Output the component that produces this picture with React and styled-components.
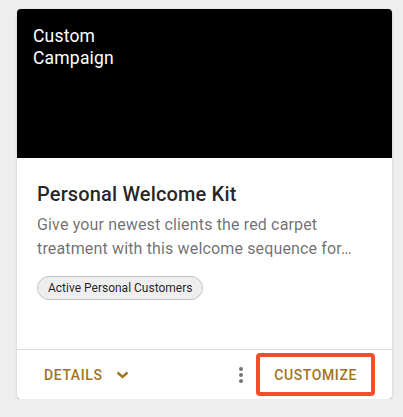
import React from 'react'
import styled, { createGlobalStyle } from 'styled-components'

const Global = createGlobalStyle`
  body {
    margin: 0;
    background: #eeeeee;
    font-family: Roboto, "Liberation Sans", sans-serif;
  }
  * { box-sizing: border-box; }
`

function App() {
  return (
    <>
      <Global />
      <S.Page>
        <S.Card>
          <S.Media>
            <S.MediaTitle>Custom Campaign</S.MediaTitle>
          </S.Media>
          <S.Content>
            <S.Title>Personal Welcome Kit</S.Title>
            <S.Description>
              Give your newest clients the red carpet treatment with this welcome
              sequence for…
            </S.Description>
            <S.Chip>Active Personal Customers</S.Chip>
          </S.Content>
          <S.Footer>
            <S.TextButton>
              DETAILS
              <svg width="13" height="8" viewBox="0 0 13 8">
                <path d="M1.5 1.5 L6.5 6 L11.5 1.5" fill="none" stroke="currentColor" strokeWidth="2.4" />
              </svg>
            </S.TextButton>
            <S.Spacer />
            <S.IconButton aria-label="more">
              <svg width="6" height="18" viewBox="0 0 6 18">
                <circle cx="3" cy="3" r="2" fill="currentColor" />
                <circle cx="3" cy="9" r="2" fill="currentColor" />
                <circle cx="3" cy="15" r="2" fill="currentColor" />
              </svg>
            </S.IconButton>
            <S.TextButton outlined>CUSTOMIZE</S.TextButton>
          </S.Footer>
        </S.Card>
      </S.Page>
    </>
  )
}

const S = {
  Page: styled.div`
    padding: 9px 0 0 17px;
  `,
  Card: styled.div`
    width: 375px;
    background: #fff;
    border-radius: 4px;
    overflow: hidden;
    box-shadow: 0px 2px 1px -1px rgba(0, 0, 0, 0.2),
      0px 1px 1px 0px rgba(0, 0, 0, 0.14), 0px 1px 3px 0px rgba(0, 0, 0, 0.12);
  `,
  Media: styled.div`
    height: 149px;
    background: #000;
    padding: 16px 16px;
  `,
  MediaTitle: styled.div`
    max-width: 100px;
    color: #fff;
    font-size: 17.5px;
    line-height: 22px;
    font-weight: 400;
    letter-spacing: 0.2px;
  `,
  Content: styled.div`
    height: 191px;
    padding: 22px 20px 0;
    display: flex;
    flex-direction: column;
    align-items: flex-start;
  `,
  Title: styled.h2`
    margin: 0;
    font-size: 20px;
    line-height: 28px;
    font-weight: 500;
    color: rgba(0, 0, 0, 0.87);
    letter-spacing: 0.15px;
  `,
  Description: styled.p`
    margin: 5px 0 0;
    font-size: 16px;
    line-height: 24px;
    color: rgba(0, 0, 0, 0.58);
    letter-spacing: 0.15px;
  `,
  Chip: styled.span`
    margin-top: 15px;
    height: 24px;
    display: inline-flex;
    align-items: center;
    padding: 0 10px;
    border-radius: 12px;
    border: 1px solid #c4c4c4;
    background: #eeeeee;
    font-size: 12px;
    color: rgba(0, 0, 0, 0.87);
  `,
  Footer: styled.div`
    height: 50px;
    border-top: 1px solid #dcdcdc;
    display: flex;
    align-items: center;
    padding: 0 17px 0 19px;
  `,
  Spacer: styled.div`
    flex: 1;
  `,
  TextButton: styled.button`
    display: inline-flex;
    align-items: center;
    gap: 13px;
    background: none;
    font-family: inherit;
    font-size: 14px;
    font-weight: 500;
    letter-spacing: 0.6px;
    color: #a6731a;
    cursor: pointer;
    border-radius: 4px;
    border: ${(p) => (p.outlined ? '4px solid #f44e2a' : 'none')};
    height: ${(p) => (p.outlined ? '43px' : '36px')};
    padding: ${(p) => (p.outlined ? '0 14px' : '0 8px')};
    margin-left: ${(p) => (p.outlined ? '3px' : '0')};
  `,
  IconButton: styled.button`
    width: 24px;
    height: 36px;
    display: grid;
    place-items: center;
    background: none;
    border: none;
    padding: 0;
    color: #757575;
  `,
}

export default App
